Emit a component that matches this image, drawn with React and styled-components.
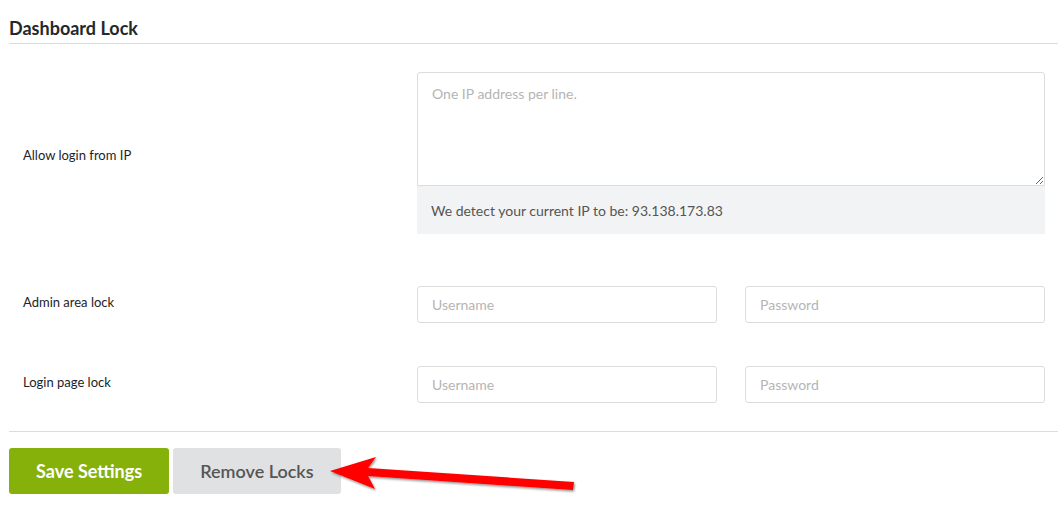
import styled, { createGlobalStyle } from "styled-components";

//#region Estilos
const GlobalStyle = createGlobalStyle`
  body {
    margin: 0;
    background: #fff;
    font-family: Lato, "Open Sans", "Liberation Sans", sans-serif;
  }
`;
const Page = styled.div`
  position: relative;
  width: 1049px;
  padding: 14px 0 0 9px;
`;
const Title = styled.h2`
  margin: 0;
  padding: 4px 0 5px;
  font-size: 18px;
  font-weight: 700;
  color: #23282d;
  line-height: 20px;
  border-bottom: 1px solid #dcdcde;
`;
const Rows = styled.div`
  display: flex;
  flex-direction: column;
  padding: 28px 0 28px;
  border-bottom: 1px solid #dcdcde;
`;
const Row = styled.div`
  display: grid;
  grid-template-columns: 408px 628px;
  align-items: center;
  margin-top: ${(p) => p.$top || 0}px;
`;
const Label = styled.div`
  padding-left: 14px;
  font-size: 13px;
  color: #1d2327;
  margin-top: ${(p) => p.$shift || 0}px;
`;
const Field = styled.div`
  display: flex;
  flex-direction: column;
`;
const Area = styled.textarea`
  box-sizing: border-box;
  width: 628px;
  height: 114px;
  margin: 0;
  padding: 12px 14px;
  border: 1px solid #dcdcde;
  border-radius: 3px 3px 0 0;
  font-family: inherit;
  font-size: 14px;
  color: #333;
  display: block;
  &::placeholder {
    color: #b5b5b5;
  }
`;
const Notice = styled.div`
  height: 48px;
  display: flex;
  align-items: center;
  padding: 0 14px;
  background: #f2f3f4;
  font-size: 14px;
  color: #555;
`;
const Pair = styled.div`
  display: flex;
  gap: 28px;
`;
const Input = styled.input`
  box-sizing: border-box;
  width: 300px;
  height: 37px;
  margin: 0;
  padding: 0 14px;
  border: 1px solid #dcdcde;
  border-radius: 3px;
  font-family: inherit;
  font-size: 14px;
  color: #333;
  &::placeholder {
    color: #b5b5b5;
  }
`;
const Footer = styled.div`
  display: flex;
  gap: 4px;
  padding-top: 16px;
`;
const Boton = styled.button`
  height: 46px;
  padding: 0 ${(p) => p.$px}px;
  border: none;
  border-radius: 3px;
  font-family: inherit;
  font-size: 18px;
  font-weight: ${(p) => (p.$primary ? 700 : 600)};
  color: ${(p) => (p.$primary ? "#fff" : "#555")};
  background: ${(p) => (p.$primary ? "#86b10b" : "#e0e1e3")};
  cursor: pointer;
`;
const Arrow = styled.svg`
  position: absolute;
  left: 326px;
  top: 453px;
  overflow: visible;
`;
//#endregion

const App = () => {
  return (
    <>
      <GlobalStyle />
      <Page>
        <Title>Dashboard Lock</Title>
        <Rows>
          <Row>
            <Label $shift={3}>Allow login from IP</Label>
            <Field>
              <Area placeholder="One IP address per line." />
              <Notice>We detect your current IP to be: 93.138.173.83</Notice>
            </Field>
          </Row>
          <Row $top={52}>
            <Label $shift={-5}>Admin area lock</Label>
            <Pair>
              <Input placeholder="Username" />
              <Input type="password" placeholder="Password" />
            </Pair>
          </Row>
          <Row $top={43}>
            <Label $shift={-5}>Login page lock</Label>
            <Pair>
              <Input placeholder="Username" />
              <Input type="password" placeholder="Password" />
            </Pair>
          </Row>
        </Rows>
        <Footer>
          <Boton $primary $px={27}>Save Settings</Boton>
          <Boton $px={27}>Remove Locks</Boton>
        </Footer>
        <Arrow width="260" height="45" viewBox="0 0 260 45">
          <defs>
            <filter id="sombra" x="-10%" y="-30%" width="120%" height="160%">
              <feDropShadow dx="1" dy="1.5" stdDeviation="0.8" floodColor="#000" floodOpacity="0.45" />
            </filter>
          </defs>
          <polygon
            filter="url(#sombra)"
            points="4,18 50,4 42,15 248,29 247,37 42,23 49,36"
            fill="#f00"
          />
        </Arrow>
      </Page>
    </>
  );
};

export default App;
